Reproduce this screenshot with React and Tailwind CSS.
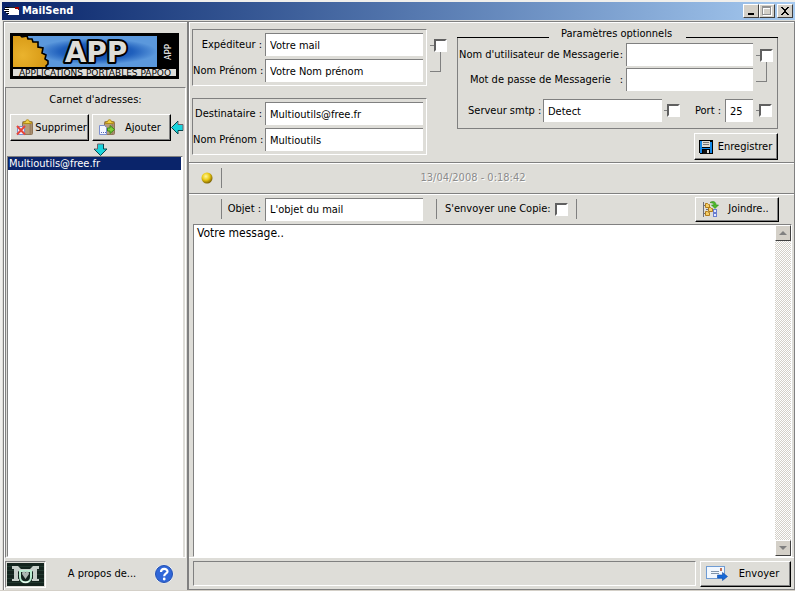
import { useState } from "react";

const Field = ({ id, className = "", ...props }) => (
  <input
    id={id}
    className={`h-[23px] min-w-0 border-t border-l border-[#808080] bg-white pl-1 outline-none ${className}`}
    {...props}
  />
);

const Check = ({ label, className = "", ...props }) => (
  <input
    type="checkbox"
    aria-label={label}
    className={`size-[13px] shrink-0 appearance-none border-2 border-t-[#606060] border-l-[#606060] border-r-white border-b-white bg-white checked:bg-[#0a246a] ${className}`}
    {...props}
  />
);

const Button = ({ icon, children, className = "", ...props }) => (
  <button
    type="button"
    className={`flex shrink-0 items-center border border-t-white border-l-white border-r-black border-b-black bg-[#deddd8] shadow-[inset_-1px_-1px_0_#808080] ${className}`}
    {...props}
  >
    {icon}
    <span className="flex-1 text-center">{children}</span>
  </button>
);

// checkbox attached to two stacked fields
const LinkedCheck = ({ label }) => (
  <div className="flex flex-col">
    <div className="flex items-center">
      <div className="h-px w-1 bg-[#808080]" />
      <Check label={label} />
    </div>
    <div className="h-5 w-[11px] border-r border-b border-[#808080]" />
  </div>
);

const MailIcon = () => (
  <svg width="16" height="10" viewBox="0 0 16 10" shapeRendering="crispEdges">
    <path d="M5 1h10v8H4V6h1z" fill="#fff" />
    <path d="M11 1h4v3h-1V3h-3z" fill="#a00000" />
    <path d="M5 1h6v1H5z" fill="#222" />
    <path d="M1 2h4v1H1zM0 4h5v1H0zM2 6h3v1H2z" fill="#fff" />
    <path d="M1 1h4v1H1zM0 3h5v1H0zM1 5h4v1H1zM3 7h2v1H3z" fill="#000" />
  </svg>
);

const Banner = () => (
  <svg viewBox="0 0 169 46" className="block w-full" role="img" aria-label="APP">
    <defs>
      <radialGradient id="sky" cx="0.58" cy="0.5" r="0.42">
        <stop offset="0" stopColor="#0c3f9c" />
        <stop offset="0.6" stopColor="#1f5fbc" />
        <stop offset="1" stopColor="#5b98dc" />
      </radialGradient>
      <radialGradient id="gear" cx="0.3" cy="0.6" r="0.8">
        <stop offset="0" stopColor="#eab32e" />
        <stop offset="1" stopColor="#d3930f" />
      </radialGradient>
    </defs>
    <rect width="169" height="46" fill="#000" />
    <rect x="3" y="3" width="144" height="31" fill="url(#sky)" />
    <path
      d="M2 2h8l2 2 5-1 1 3 4 0 1 3 5 0 0 5 5 1-1 5 4 2-1 4 3 2 0 3-2 2 1 3H2z"
      fill="url(#gear)"
      stroke="#000"
      strokeWidth="1.6"
    />
    <path d="M0 0h169v3H0zM0 0h3v46H0zM0 34h169v2H0z" fill="#000" />
    <text
      x="86"
      y="29"
      textAnchor="middle"
      fontFamily="DejaVu Sans"
      fontWeight="bold"
      fontSize="28"
      fill="#deddd8"
      stroke="#000"
      strokeWidth="4"
      strokeLinejoin="round"
      paintOrder="stroke"
    >
      APP
    </text>
    <text
      transform="translate(161 27) rotate(-90)"
      fontFamily="DejaVu Sans Mono"
      fontSize="9"
      fill="#fff"
    >
      APP
    </text>
    <rect x="3" y="36" width="163" height="7" fill="#deddd8" />
    <text
      x="85"
      y="43"
      textAnchor="middle"
      fontFamily="DejaVu Sans"
      fontSize="9"
      fill="#000"
    >
      APPLICATIONS PORTABLES PAPOO
    </text>
  </svg>
);

const Clipboard = () => (
  <>
    <rect x="6.500" y="2.500" width="10" height="13" rx="1" fill="#b59b7c" stroke="#8f7558" />
    <path d="M14.500 5v10" stroke="#9c8162" strokeWidth="2" />
    <path d="M7.500 4.500V3h2c0-3 4-3 4 0h2v1.500z" fill="#f0cf45" stroke="#b08c1a" />
  </>
);

const DeleteIcon = () => (
  <svg width="18" height="17" viewBox="0 0 18 17" className="ml-[5px] shrink-0">
    <Clipboard />
    <rect x="1.500" y="7.500" width="7" height="8" fill="#eef2ff" stroke="#7b8fd0" />
    <path d="M1 7l8 8.500M9 7L1 15.500" stroke="#e8463a" strokeWidth="2" />
  </svg>
);

const AddIcon = () => (
  <svg width="18" height="17" viewBox="0 0 18 17" className="ml-[5px] shrink-0">
    <Clipboard />
    <path d="M1.500 6.500h5l2 2v7h-7z" fill="#f4f6ff" stroke="#7b8fd0" />
    <path d="M3 13.500h1m1 0h1m1 0h1" stroke="#5469b8" />
    <path d="M9.500 9H12V6.500L16.500 10.500 12 14.500V12H9.500z" fill="#7fd03a" stroke="#3a8a18" />
  </svg>
);

const CyanArrow = ({ className }) => (
  <svg width="13" height="13" viewBox="0 0 13 13" className={`shrink-0 ${className}`}>
    <path d="M3.500 1h6v5H13L6.500 12.500 0 6h3.500z" fill="#18d4dc" />
    <path d="M3.500 6V1h6M0 6h3.500" fill="none" stroke="#70606a" />
    <path d="M9.500 1v5H13L6.500 12.500 0 6" fill="none" stroke="#06484e" />
  </svg>
);

const FloppyIcon = () => (
  <svg width="14" height="14" viewBox="0 0 14 14" className="ml-1 shrink-0" shapeRendering="crispEdges">
    <path d="M0 0h14v14H1l-1-1z" fill="#000" />
    <path d="M1 1h2v12H1zM11 2h2v11h-2zM3 8h8v1H3z" fill="#1489e8" />
    <path d="M3 1h8v6H3z" fill="#deddd8" />
    <path d="M4 2h6v1H4zM4 4h6v1H4z" fill="#777" />
    <path d="M4 10h6v4H4z" fill="#111" />
    <path d="M8 10h2v3H8z" fill="#deddd8" />
  </svg>
);

const JoinIcon = () => (
  <svg width="17" height="17" viewBox="0 0 17 17" className="ml-[6px] shrink-0">
    <path d="M1.500 1v15M1 4.500h3M1 12.500h3M4 8.500h3" stroke="#6f6f78" fill="none" />
    <g fill="#f6cf68" stroke="#b07c1c">
      <path d="M3.500 2.500h2l1 1h1v3h-4zM6.500 6.500h2l1 1h1v3h-4zM3.500 10.500h2l1 1h1v3h-4z" />
    </g>
    <path d="M8 1.500c3-2 6-1 6 2.500h2.500L13 7.500 9.500 4H12c0-2-2-2-4-2.500z" fill="#4dbb2a" stroke="#2c8a16" strokeWidth="0.600" />
    <g fill="#e4eaff" stroke="#6a7ed0">
      <rect x="11.500" y="8.500" width="3" height="3" />
      <rect x="11.500" y="12.500" width="3" height="3" />
    </g>
  </svg>
);

const SendIcon = () => (
  <svg width="22" height="15" viewBox="0 0 22 15" className="ml-[5px] shrink-0">
    <rect x="0.500" y="0.500" width="18" height="12" fill="#f2f8ff" stroke="#6f9cd4" />
    <rect x="14" y="2" width="2" height="3" fill="#c07058" />
    <path d="M5 5.500h8M5 7.500h8" stroke="#8296ac" />
    <path d="M11.500 9h5V6.500l5 4-5 4V12h-5z" fill="#1668d8" stroke="#0d4aa8" strokeWidth="0.600" />
  </svg>
);

const LogoIcon = () => (
  <svg width="37" height="23" viewBox="0 0 37 23" className="block">
    <rect width="37" height="23" fill="#14241e" />
    <path d="M0 3.500h37M0 7.500h37M0 11.500h37M0 15.500h37M0 19.500h37" stroke="#22382f" />
    <g fill="#c6cec9">
      <path d="M5 3h6l3 3h9l3-3h6v3h-2v10h2v2h-7v-2h1V8l-3 2h-9l-3-2v8h1v2H5v-2h2V6H5z" />
    </g>
    <path d="M13 8h11v6c0 7-11 7-11 0z" fill="#14241e" stroke="#b9ecd0" strokeWidth="2" />
    <path d="M18.500 16l-3.500-5c0-3 3-3 3.500-1 .5-2 3.500-2 3.500 1z" fill="#aab6b0" />
    <path d="M15 18c2 2 5 2 7 0" fill="none" stroke="#fff" />
  </svg>
);

const HelpIcon = () => (
  <svg width="20" height="20" viewBox="0 0 20 20">
    <circle cx="10" cy="10" r="9.500" fill="#e9effa" />
    <circle cx="10" cy="10" r="8.500" fill="#2f66d8" stroke="#2350b0" />
    <path d="M7 8c0-4 6.500-4 6.500-.5C13.500 9.500 10.200 9.500 10.200 12.200" fill="none" stroke="#fff" strokeWidth="2.200" />
    <circle cx="10.200" cy="15" r="1.400" fill="#fff" />
  </svg>
);

const Led = () => (
  <svg width="12" height="12" viewBox="0 0 12 12">
    <defs>
      <radialGradient id="led" cx="0.4" cy="0.35" r="0.7">
        <stop offset="0" stopColor="#fff79a" />
        <stop offset="0.5" stopColor="#eac810" />
        <stop offset="1" stopColor="#6b5200" />
      </radialGradient>
    </defs>
    <circle cx="6" cy="6" r="5.500" fill="url(#led)" />
  </svg>
);

const CaptionButton = ({ label, children, className = "" }) => (
  <button
    type="button"
    aria-label={label}
    className={`flex h-[14px] w-4 items-center justify-center border border-t-white border-l-white border-r-[#404040] border-b-[#404040] bg-[#d4d0c8] ${className}`}
  >
    <svg width="12" height="10" viewBox="0 0 12 10" shapeRendering="crispEdges">
      {children}
    </svg>
  </button>
);

const ScrollButton = ({ label, d }) => (
  <button
    type="button"
    aria-label={label}
    className="flex size-4 items-center justify-center border border-t-white border-l-white border-r-[#404040] border-b-[#404040] bg-[#d4d0c8]"
  >
    <svg width="8" height="4" viewBox="0 0 8 4">
      <path d={d} fill="#808080" />
    </svg>
  </button>
);

const group = "border border-t-[#808080] border-l-[#808080] border-r-white border-b-white";

const Identity = ({ prefix, label, mail, name }) => (
  <div className={`grid grid-cols-[72px_158px] items-center gap-y-[3px] py-[3px] pr-[3px] ${group}`}>
    <label htmlFor={`${prefix}-mail`} className="pr-[3px] text-right whitespace-nowrap">{label} :</label>
    <Field id={`${prefix}-mail`} defaultValue={mail} />
    <label htmlFor={`${prefix}-name`} className="pr-[3px] text-right whitespace-nowrap">Nom Prénom :</label>
    <Field id={`${prefix}-name`} defaultValue={name} />
  </div>
);

const Sidebar = () => {
  const [contacts] = useState(["Multioutils@free.fr"]);
  const [selected, setSelected] = useState(0);

  return (
    <aside className="flex w-[184px] shrink-0 flex-col border-t border-l border-[#808080]">
      <div className="flex flex-1 flex-col border-t border-l border-white pr-px">
        <div className="pt-[10px] pr-[7px] pb-2 pl-[5px]">
          <Banner />
        </div>
        <div className={`flex flex-1 flex-col ${group}`}>
          <h2 className="mt-1 text-center leading-4">Carnet d'adresses:</h2>
          <div className="mt-[6px] flex items-center pl-1">
            <Button icon={<DeleteIcon />} className="mr-[3px] h-[27px] w-[79px]">Supprimer</Button>
            <Button icon={<AddIcon />} className="h-[27px] w-[79px]">Ajouter</Button>
            <CyanArrow className="rotate-90" />
          </div>
          <CyanArrow className="mt-[2px] ml-[88px]" />
          <ul className="mr-[2px] ml-px flex-1 border border-t-[#808080] border-l-[#808080] border-r-white border-b-white bg-white pr-px">
            {contacts.map((contact, i) => (
              <li key={contact}>
                <button
                  type="button"
                  onClick={() => setSelected(i)}
                  className={`block h-[13px] w-full pl-px text-left leading-[13px] ${selected === i ? "bg-[#0a246a] text-white" : "text-black"}`}
                >
                  {contact}
                </button>
              </li>
            ))}
          </ul>
        </div>
        <div className="flex h-[32px] items-center">
          <div className={`p-px ${group}`}>
            <LogoIcon />
          </div>
          <a href="#about" className="flex-1 pl-1 text-center">A propos de...</a>
          <a href="#help" aria-label="Aide" className="mr-3">
            <HelpIcon />
          </a>
        </div>
      </div>
    </aside>
  );
};

const Options = () => (
  <div role="group" aria-labelledby="options-title" className="w-[321px]">
    <div className="flex h-[9px] items-center">
      <div className="mt-[7px] h-px flex-1 bg-black" />
      <div id="options-title" className="w-[137px] pr-6 pl-3 whitespace-nowrap">Paramètres optionnels</div>
      <div className="mt-[7px] h-px flex-1 bg-black" />
    </div>
    <div className="border border-t-0 border-[#808080] pt-[5px] pb-[6px]">
      <div className="flex">
        <div className="grid grid-cols-[168px_127px] items-center gap-y-[2px]">
          <label htmlFor="user" className="flex justify-between pr-[3px] pl-px whitespace-nowrap">
            <span>Nom d'utilisateur de Messagerie</span>
            <span>:</span>
          </label>
          <Field id="user" />
          <label htmlFor="password" className="flex justify-between pr-[3px] pl-3 whitespace-nowrap">
            <span>Mot de passe de Messagerie</span>
            <span>:</span>
          </label>
          <Field id="password" type="password" />
        </div>
        <div className="mt-[6px] ml-[3px]">
          <LinkedCheck label="Utiliser ces identifiants" />
        </div>
      </div>
      <div className="mt-2 flex items-center">
        <label htmlFor="smtp" className="w-[85px] pl-[10px] whitespace-nowrap">Serveur smtp :</label>
        <Field id="smtp" defaultValue="Detect" className="w-[119px]" />
        <div className="ml-[2px] h-px w-[3px] bg-[#808080]" />
        <Check label="Serveur personnalisé" />
        <label htmlFor="port" className="w-[45px] pr-1 text-right whitespace-nowrap">Port :</label>
        <Field id="port" defaultValue="25" className="w-7" />
        <div className="ml-[3px] h-px w-[3px] bg-[#808080]" />
        <Check label="Port personnalisé" />
      </div>
    </div>
  </div>
);

const App = () => {
  const [message, setMessage] = useState("Votre message..");

  return (
    <div className="flex min-h-screen flex-col bg-[#d4d0c8] pb-px font-['DejaVu_Sans_Condensed','DejaVu_Sans',sans-serif] text-[11px] leading-4 text-black">
      <div className="flex flex-1 flex-col border-t-2 border-l-2 border-[#f0efec]">
        <header className="flex h-[18px] items-center bg-linear-to-r from-[#0a246a] to-[#a6caf0] px-[2px] text-white">
          <MailIcon />
          <h1 className="ml-[2px] flex-1 font-bold">MailSend</h1>
          <CaptionButton label="Réduire">
            <path d="M3 7h6v2H3z" fill="#000" />
          </CaptionButton>
          <CaptionButton label="Agrandir">
            <path d="M2 1h9v9H2zM3 3v6h7V3z" fillRule="evenodd" fill="#fff" />
            <path d="M1 0h9v9H1zM2 2v6h7V2z" fillRule="evenodd" fill="#909090" />
          </CaptionButton>
          <CaptionButton label="Fermer" className="ml-[2px]">
            <path d="M2 1h2v1h1v1h2V2h1V1h2v1H9v1H8v1H7v2h1v1h1v1h1v1H8V8H7V7H5v1H4v1H2V8h1V7h1V6h1V4H4V3H3V2H2z" fill="#000" />
          </CaptionButton>
        </header>

        <div className="flex flex-1 bg-[#deddd8] pt-px pl-px">
          <Sidebar />
          <main className="flex min-w-0 flex-1 flex-col border-t border-r border-b border-l-2 border-[#808080]">
            <section className="flex border-t border-l border-white pt-[6px] pr-4 pb-[2px] pl-[2px]">
              <div className="flex flex-col gap-3">
                <Identity prefix="from" label="Expéditeur" mail="Votre mail" name="Votre Nom prénom" />
                <Identity prefix="to" label="Destinataire" mail="Multioutils@free.fr" name="Multioutils" />
              </div>
              <div className="mt-[10px] ml-[3px]">
                <LinkedCheck label="Mémoriser l'expéditeur" />
              </div>
              <div className="ml-auto flex flex-col items-end">
                <Options />
                <Button icon={<FloppyIcon />} className="mt-1 h-[27px] w-[84px]">Enregistrer</Button>
              </div>
            </section>

            <section className="flex h-[31px] items-center border-t border-[#808080] pl-3 shadow-[inset_0_1px_0_#fff]">
              <Led />
              <div className="ml-2 h-5 w-px bg-[#808080]" />
              <time className="flex-1 pr-[70px] text-center text-[#8c8c8c] [text-shadow:1px_1px_0_#fff]">
                13/04/2008 - 0:18:42
              </time>
            </section>

            <section className="flex h-[31px] items-center border-t border-[#808080] pr-[15px] pl-8 shadow-[inset_0_1px_0_#fff]">
              <div className="h-5 w-px bg-[#808080]" />
              <label htmlFor="subject" className="w-[43px] pr-1 text-right">Objet :</label>
              <Field id="subject" defaultValue="L'objet du mail" className="w-[158px]" />
              <div className="ml-[13px] h-5 w-px bg-[#808080]" />
              <label className="ml-2 flex items-center gap-1 whitespace-nowrap">
                S'envoyer une Copie:
                <Check label="S'envoyer une Copie" />
              </label>
              <div className="ml-2 h-5 w-px bg-[#808080]" />
              <Button icon={<JoinIcon />} className="ml-auto h-[25px] w-[84px]">Joindre..</Button>
            </section>

            <div className="mr-[2px] ml-1 flex flex-1 border border-t-[#808080] border-l-[#808080] border-r-white border-b-white bg-white">
              <textarea
                aria-label="Message"
                value={message}
                onChange={(e) => setMessage(e.target.value)}
                className="min-w-0 flex-1 resize-none px-[3px] text-xs leading-4 outline-none"
              />
              <div className="flex flex-col justify-between bg-[repeating-conic-gradient(#d4d0c8_0_25%,#fff_0_50%)] bg-[length:2px_2px]">
                <ScrollButton label="Défiler vers le haut" d="M0 4l4-4 4 4z" />
                <ScrollButton label="Défiler vers le bas" d="M0 0l4 4 4-4z" />
              </div>
            </div>

            <footer className="flex h-8 items-center gap-1 border-t border-white pr-[3px] pl-1">
              <div className={`h-[25px] flex-1 ${group}`} />
              <Button icon={<SendIcon />} className="h-[26px] w-[91px]">Envoyer</Button>
            </footer>
          </main>
        </div>
      </div>
    </div>
  );
};

export default App;
